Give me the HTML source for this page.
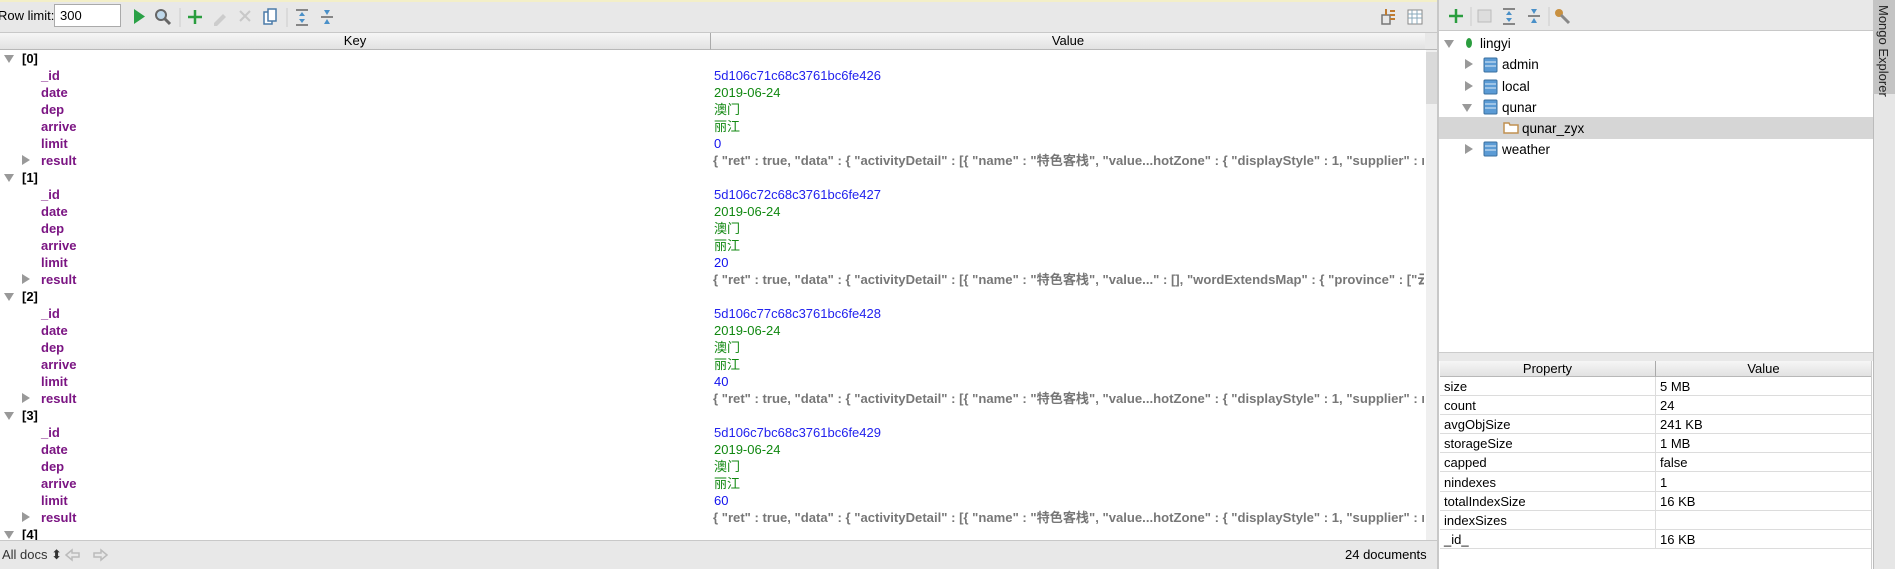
<!DOCTYPE html>
<html><head><meta charset="utf-8"><style>
*{margin:0;padding:0;box-sizing:border-box}
body{width:1895px;height:569px;overflow:hidden;background:#fff;font-family:"Liberation Sans","Noto Sans CJK SC",sans-serif;font-size:13px;position:relative;color:#000}
.a{position:absolute}
.tb{background:#e8e8e8}
.k{position:absolute;left:41px;color:#7b1583;font-weight:bold;font-size:13px;line-height:17px}
.d{position:absolute;left:22px;color:#000;font-weight:bold;line-height:17px}
.v{position:absolute;left:714px;line-height:17px;font-size:13px;white-space:nowrap}
.r{position:absolute;left:713px;width:711px;overflow:hidden;white-space:nowrap;color:#777;font-weight:bold;font-size:13.1px;line-height:17px;letter-spacing:0}
.tri{position:absolute;width:0;height:0}
.down{border-left:5px solid transparent;border-right:5px solid transparent;border-top:8px solid #999}
.right{border-top:5px solid transparent;border-bottom:5px solid transparent;border-left:8px solid #999}
.hdr{background:linear-gradient(#f6f6f6,#e2e2e2);border-bottom:1px solid #b8b8b8;text-align:center;line-height:16px}
.pr{position:absolute;left:1440px;width:431px;height:19.1px;border-bottom:1px solid #dcdcdc;font-size:13px;line-height:19px}
.pr span{position:absolute;left:4px}
.pr b{position:absolute;left:220px;font-weight:normal}
.tt{position:absolute;font-size:13.5px;line-height:21px}
</style></head><body>
<!-- main toolbar -->
<div class="a tb" style="left:0;top:0;width:1438px;height:33px;border-bottom:1px solid #c8c8c8;border-top:2px solid #f3efc8"></div>
<div class="a" style="left:-2px;top:8px;font-size:13px">Row limit:</div>
<div class="a" style="left:54px;top:4px;width:67px;height:23px;background:#fff;border:1px solid #aaa;padding:3px 5px;font-size:13px">300</div>
<svg class="a" style="left:130px;top:6px" width="220" height="22">
<polygon points="4,3 15,10.5 4,18" fill="#2aa146"/>
<circle cx="31" cy="9" r="5" fill="#bfd8ea" stroke="#666" stroke-width="2"/><line x1="35" y1="13" x2="40" y2="18" stroke="#666" stroke-width="3"/>
<line x1="50" y1="2" x2="50" y2="21" stroke="#ccc"/>
<path d="M65 4v14M58 11h14" stroke="#2a9d3e" stroke-width="2.5"/>
<path d="M84 17l9-9 3 3-9 9h-3z" fill="#ccc"/>
<path d="M110 5l10 10M120 5l-10 10" stroke="#c8c8c8" stroke-width="2"/>
<rect x="134" y="6" width="8" height="12" fill="#fff" stroke="#4a7aa8" stroke-width="1.5"/><rect x="138" y="3" width="8" height="12" fill="#fff" stroke="#4a7aa8" stroke-width="1.5"/>
<line x1="157" y1="2" x2="157" y2="21" stroke="#ccc"/>
<path d="M166 4h12M166 19h12" stroke="#666" stroke-width="1.5"/><path d="M172 6l-3 4h6zM172 17l-3-4h6z" fill="#4a90c8"/>
<path d="M191 11h12" stroke="#666" stroke-width="1.5"/><path d="M197 9l-3-5h6zM197 13l-3 5h6z" fill="#4a90c8"/>
</svg>
<svg class="a" style="left:1380px;top:6px" width="50" height="22">
<rect x="2" y="9" width="8" height="9" fill="none" stroke="#777" stroke-width="1.5"/><path d="M6 3v6M10 5h5M10 9h5M10 13h5" stroke="#c07b30" stroke-width="2"/>
<rect x="28" y="4" width="14" height="14" fill="#fff" stroke="#888"/><path d="M28 8h14M28 12h14M32 4v14M37 4v14" stroke="#8ab" stroke-width="1"/>
</svg>
<!-- header -->
<div class="a hdr" style="left:0;top:33px;width:711px;height:17px;border-right:1px solid #aaa">Key</div>
<div class="a hdr" style="left:711px;top:33px;width:714px;height:17px">Value</div>
<div class="a" style="left:1425px;top:33px;width:13px;height:17px;background:#e8e8e8;border-bottom:1px solid #b8b8b8"></div>
<div class="a" style="left:1426px;top:50px;width:12px;height:490px;background:#efefef"></div>
<div class="a" style="left:1426px;top:52px;width:11px;height:52px;background:#dadada"></div>
<!-- rows -->
<div class="tri down" style="left:4px;top:55px"></div><div class="d" style="top:50px">[0]</div>
<div class="k" style="top:67px">_id</div><div class="v" style="top:67px;color:#2222ee">5d106c71c68c3761bc6fe426</div>
<div class="k" style="top:84px">date</div><div class="v" style="top:84px;color:#118811">2019-06-24</div>
<div class="k" style="top:101px">dep</div><div class="v" style="top:101px;color:#118811">澳门</div>
<div class="k" style="top:118px">arrive</div><div class="v" style="top:118px;color:#118811">丽江</div>
<div class="k" style="top:135px">limit</div><div class="v" style="top:135px;color:#1111ee">0</div>
<div class="tri right" style="left:22px;top:155px"></div><div class="k" style="top:152px">result</div><div class="r" style="top:152px">{ "ret" : true, "data" : { "activityDetail" : [{ "name" : "特色客栈", "value...hotZone" : { "displayStyle" : 1, "supplier" : null</div>

<div class="tri down" style="left:4px;top:174px"></div><div class="d" style="top:169px">[1]</div>
<div class="k" style="top:186px">_id</div><div class="v" style="top:186px;color:#2222ee">5d106c72c68c3761bc6fe427</div>
<div class="k" style="top:203px">date</div><div class="v" style="top:203px;color:#118811">2019-06-24</div>
<div class="k" style="top:220px">dep</div><div class="v" style="top:220px;color:#118811">澳门</div>
<div class="k" style="top:237px">arrive</div><div class="v" style="top:237px;color:#118811">丽江</div>
<div class="k" style="top:254px">limit</div><div class="v" style="top:254px;color:#1111ee">20</div>
<div class="tri right" style="left:22px;top:274px"></div><div class="k" style="top:271px">result</div><div class="r" style="top:271px">{ "ret" : true, "data" : { "activityDetail" : [{ "name" : "特色客栈", "value..." : [], "wordExtendsMap" : { "province" : ["云南</div>

<div class="tri down" style="left:4px;top:293px"></div><div class="d" style="top:288px">[2]</div>
<div class="k" style="top:305px">_id</div><div class="v" style="top:305px;color:#2222ee">5d106c77c68c3761bc6fe428</div>
<div class="k" style="top:322px">date</div><div class="v" style="top:322px;color:#118811">2019-06-24</div>
<div class="k" style="top:339px">dep</div><div class="v" style="top:339px;color:#118811">澳门</div>
<div class="k" style="top:356px">arrive</div><div class="v" style="top:356px;color:#118811">丽江</div>
<div class="k" style="top:373px">limit</div><div class="v" style="top:373px;color:#1111ee">40</div>
<div class="tri right" style="left:22px;top:393px"></div><div class="k" style="top:390px">result</div><div class="r" style="top:390px">{ "ret" : true, "data" : { "activityDetail" : [{ "name" : "特色客栈", "value...hotZone" : { "displayStyle" : 1, "supplier" : null</div>

<div class="tri down" style="left:4px;top:412px"></div><div class="d" style="top:407px">[3]</div>
<div class="k" style="top:424px">_id</div><div class="v" style="top:424px;color:#2222ee">5d106c7bc68c3761bc6fe429</div>
<div class="k" style="top:441px">date</div><div class="v" style="top:441px;color:#118811">2019-06-24</div>
<div class="k" style="top:458px">dep</div><div class="v" style="top:458px;color:#118811">澳门</div>
<div class="k" style="top:475px">arrive</div><div class="v" style="top:475px;color:#118811">丽江</div>
<div class="k" style="top:492px">limit</div><div class="v" style="top:492px;color:#1111ee">60</div>
<div class="tri right" style="left:22px;top:512px"></div><div class="k" style="top:509px">result</div><div class="r" style="top:509px">{ "ret" : true, "data" : { "activityDetail" : [{ "name" : "特色客栈", "value...hotZone" : { "displayStyle" : 1, "supplier" : null</div>
<div class="tri down" style="left:4px;top:531px"></div><div class="d" style="top:526px">[4]</div>
<!-- status bar -->
<div class="a tb" style="left:0;top:540px;width:1438px;height:29px;border-top:1px solid #c8c8c8"></div>
<div class="a" style="left:2px;top:547px;font-size:13px;color:#333">All docs ⬍</div>
<svg class="a" style="left:64px;top:548px" width="46" height="14"><path d="M2 7l6-5v3h7v4H8v3z" fill="none" stroke="#bbb" stroke-width="1.5"/><path d="M43 7l-6-5v3h-7v4h7v3z" fill="none" stroke="#bbb" stroke-width="1.5"/></svg>
<div class="a" style="left:1345px;top:547px;font-size:13px">24 documents</div>
<!-- right panel -->
<div class="a" style="left:1437px;top:0;width:2px;height:569px;background:#c8c8c8"></div>
<div class="a tb" style="left:1439px;top:0;width:434px;height:31px;border-bottom:1px solid #c8c8c8"></div>
<svg class="a" style="left:1445px;top:5px" width="130" height="22">
<path d="M11 4v14M4 11h14" stroke="#2a9d3e" stroke-width="2.5"/>
<line x1="26" y1="2" x2="26" y2="21" stroke="#ccc"/>
<rect x="33" y="5" width="13" height="12" fill="#ddd" stroke="#bbb"/>
<path d="M58 4h12M58 19h12" stroke="#666" stroke-width="1.5"/><path d="M64 6l-3 4h6zM64 17l-3-4h6z" fill="#4a90c8"/>
<path d="M83 11h12" stroke="#666" stroke-width="1.5"/><path d="M89 9l-3-5h6zM89 13l-3 5h6z" fill="#4a90c8"/>
<line x1="104" y1="2" x2="104" y2="21" stroke="#ccc"/>
<circle cx="114" cy="8" r="4" fill="#c89040"/><path d="M116 10l8 8" stroke="#888" stroke-width="3"/>
</svg>
<!-- tree -->
<div class="a" style="left:1439px;top:117px;width:434px;height:22px;background:#d6d6d6"></div>
<div class="tri down" style="left:1444px;top:40px"></div>
<svg class="a" style="left:1465px;top:37px" width="8" height="12"><ellipse cx="4" cy="6" rx="3" ry="5" fill="#2a9d3e"/></svg>
<div class="tt" style="left:1480px;top:33px">lingyi</div>
<div class="tri right" style="left:1465px;top:59px"></div>
<div class="tri right" style="left:1465px;top:81px"></div>
<div class="tri down" style="left:1462px;top:104px"></div>
<div class="tri right" style="left:1465px;top:144px"></div>
<svg class="a" style="left:1483px;top:57px" width="16" height="100">
<g fill="#5b9bd5" stroke="#3a6f9f"><rect x="1" y="1" width="13" height="14" rx="1"/><rect x="1" y="23" width="13" height="14" rx="1"/><rect x="1" y="43" width="13" height="14" rx="1"/><rect x="1" y="85" width="13" height="14" rx="1"/></g>
<g stroke="#e0eef8"><path d="M2 5h11M2 9h11M2 27h11M2 31h11M2 47h11M2 51h11M2 89h11M2 93h11"/></g>
</svg>
<svg class="a" style="left:1503px;top:121px" width="16" height="13"><path d="M1 2h5l1 2h8v8H1z" fill="#fff" stroke="#c09050" stroke-width="1.5"/></svg>
<div class="tt" style="left:1502px;top:54px">admin</div>
<div class="tt" style="left:1502px;top:76px">local</div>
<div class="tt" style="left:1502px;top:97px">qunar</div>
<div class="tt" style="left:1522px;top:118px">qunar_zyx</div>
<div class="tt" style="left:1502px;top:139px">weather</div>
<!-- splitter -->
<div class="a" style="left:1439px;top:352px;width:434px;height:9px;background:#e8e8e8;border-top:1px solid #ccc"></div>
<!-- properties -->
<div class="a hdr" style="left:1440px;top:361px;width:216px;height:16px;border-right:1px solid #aaa;font-size:13px;line-height:15px">Property</div>
<div class="a hdr" style="left:1656px;top:361px;width:215px;height:16px;font-size:13px;line-height:15px">Value</div>
<div class="a" style="left:1655px;top:377px;width:1px;height:172px;background:#dcdcdc"></div>
<div class="a" style="left:1871px;top:361px;width:1px;height:208px;background:#ccc"></div>
<div class="pr" style="top:377px"><span>size</span><b>5 MB</b></div>
<div class="pr" style="top:396.1px"><span>count</span><b>24</b></div>
<div class="pr" style="top:415.2px"><span>avgObjSize</span><b>241 KB</b></div>
<div class="pr" style="top:434.3px"><span>storageSize</span><b>1 MB</b></div>
<div class="pr" style="top:453.4px"><span>capped</span><b>false</b></div>
<div class="pr" style="top:472.5px"><span>nindexes</span><b>1</b></div>
<div class="pr" style="top:491.6px"><span>totalIndexSize</span><b>16 KB</b></div>
<div class="pr" style="top:510.7px"><span>indexSizes</span><b></b></div>
<div class="pr" style="top:529.8px"><span>_id_</span><b>16 KB</b></div>
<!-- side tab -->
<div class="a" style="left:1873px;top:0;width:22px;height:569px;background:#e6e6e6;border-left:1px solid #bbb"></div>
<div class="a" style="left:1873px;top:0;width:22px;height:94px;background:#c4c4c4"></div>
<div class="a" style="left:1876px;top:5px;writing-mode:vertical-rl;font-size:13px;color:#222">Mongo Explorer</div>
</body></html>
